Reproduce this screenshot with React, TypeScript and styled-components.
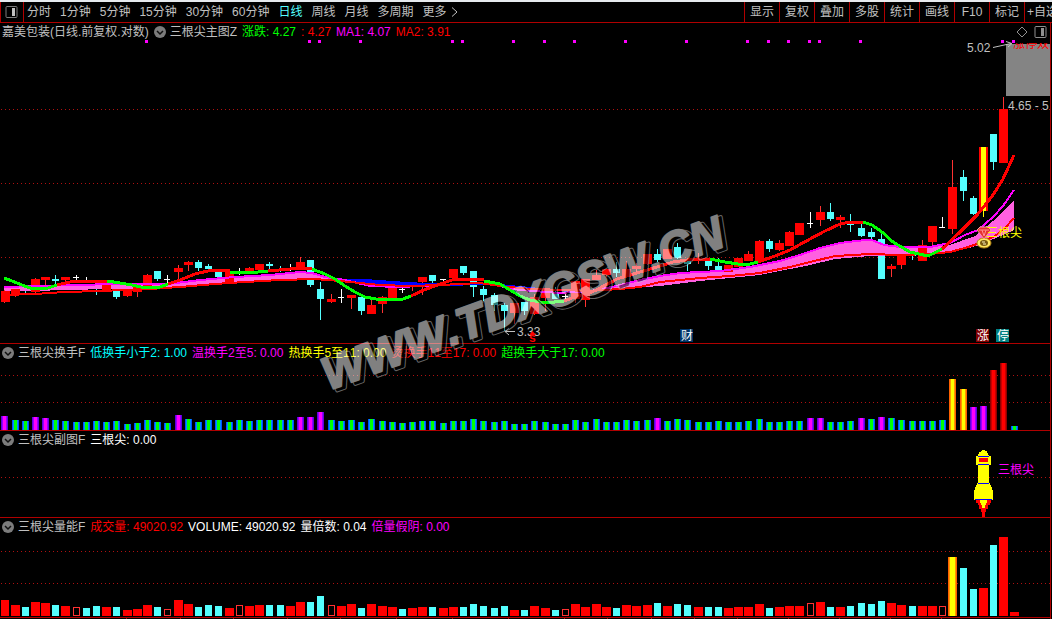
import React from 'react';
import styled, { createGlobalStyle } from 'styled-components';

const RED = '#ff0000';
const LINE = '#b00000';
const CYAN = '#54ffff';
const GREY = '#c0c0c0';
const MAGENTA = '#ff00ff';
const GREEN = '#00ff00';
const FONT = '"Liberation Sans", "Noto Sans CJK SC", sans-serif';

const Global = createGlobalStyle`
  body { margin: 0; background: #000; }
  * { box-sizing: border-box; }
`;

const Page = styled.div`
  background: #000;
  color: ${GREY};
  font-family: ${FONT};
  font-size: 12px;
  font-kerning: none;
  line-height: 16px;
  overflow: hidden;
`;

const TopStrip = styled.div`
  height: 2px;
  background: #e6eaee;
`;

const Toolbar = styled.nav`
  display: flex;
  align-items: stretch;
  height: 21px;
  border-bottom: 1px solid ${LINE};
  white-space: nowrap;
`;

const PlainButton = styled.button`
  margin: 0;
  padding: 0;
  border: 0;
  background: none;
  color: inherit;
  font: inherit;
  font-kerning: none;
  cursor: pointer;
`;

const LayoutButton = styled(PlainButton)`
  display: flex;
  align-items: center;
  width: 24px;
  padding-left: 4px;
  border: solid ${LINE};
  border-width: 0 1px;
`;

const Periods = styled.div`
  display: flex;
  flex: 1;
  gap: 9px;
  padding-left: 3px;
`;

const PeriodButton = styled(PlainButton)<{ $active?: boolean }>`
  display: flex;
  align-items: center;
  gap: 4px;
  color: ${(p) => (p.$active ? CYAN : GREY)};
`;

const Tools = styled.div`
  display: flex;
`;

const ToolButton = styled(PlainButton)`
  width: 35px;
  border-left: 1px solid ${LINE};
  &:last-child {
    width: 28px;
    padding-left: 2px;
    overflow: hidden;
    text-align: left;
  }
`;

const Workspace = styled.main`
  position: relative;
  margin-right: 1px;
  border-right: 1px solid ${LINE};
`;

const Panel = styled.section`
  border-bottom: 1px solid ${LINE};
  &:last-of-type {
    border-bottom: 0;
  }
`;

const PanelHeader = styled.header`
  display: flex;
  align-items: center;
  gap: 5px;
  height: 17px;
  padding: 0 3px 0 2px;
  white-space: nowrap;
`;

const Title = styled.h2`
  display: flex;
  align-items: center;
  gap: 4px;
  margin: 0;
  font: inherit;
  font-kerning: none;
`;

const Value = styled.span<{ $color: string }>`
  color: ${(p) => p.$color};
`;

const HeaderTools = styled.div`
  display: flex;
  gap: 6px;
  margin-left: auto;
`;

const IconButton = styled(PlainButton)`
  display: flex;
`;

const Chart = styled.svg`
  display: block;
  width: 100%;
  height: auto;
  font-family: ${FONT};
  font-size: 12px;
`;

const Watermark = styled.svg`
  position: absolute;
  top: 0;
  left: 0;
  width: 100%;
  pointer-events: none;
`;

/* Bars sit 10px apart, with one extra pixel roughly every fifth bar. */
const slot = (i: number) => {
  if (i === 0) return 1;
  const shift = i < 42 ? 2 : i < 73 ? 3 : 4;
  return 2 + 10 * i + Math.max(0, Math.floor((i - shift) / 5));
};

/* kind, high, low, body top, body bottom */
type Candle = [string, number, number, number, number];
const candles: Candle[] = [
  ['R', 290, 303, 291, 302], ['R', 289, 297, 289, 294], ['C', 285, 293, 286, 290], ['R', 278, 293, 279, 292],
  ['R', 277, 286, 277, 280], ['C', 275, 285, 279, 281], ['R', 277, 281, 277, 280], ['W', 275, 281, 277, 278],
  ['W', 277, 282, 281, 282], ['C', 282, 295, 282, 283], ['R', 283, 291, 283, 291], ['C', 286, 299, 288, 297],
  ['R', 289, 297, 289, 296], ['R', 287, 297, 287, 292], ['R', 274, 289, 275, 289], ['C', 271, 281, 271, 279],
  ['W', 275, 283, 279, 280], ['R', 265, 279, 268, 272], ['R', 261, 271, 262, 265], ['C', 260, 271, 262, 268],
  ['C', 264, 270, 266, 269], ['C', 269, 277, 269, 277], ['R', 271, 282, 271, 282], ['W', 268, 275, 273, 274],
  ['R', 267, 274, 268, 274], ['R', 264, 270, 264, 270], ['C', 262, 269, 264, 266], ['C', 266, 272, 269, 271],
  ['W', 264, 271, 269, 270], ['R', 257, 269, 262, 269], ['C', 260, 287, 260, 285], ['C', 282, 320, 289, 299],
  ['R', 294, 303, 299, 302], ['W', 289, 303, 297, 298], ['R', 295, 309, 295, 298], ['C', 295, 315, 297, 311],
  ['R', 300, 314, 305, 314], ['R', 296, 313, 297, 304], ['R', 287, 300, 287, 298], ['W', 287, 293, 289, 290],
  ['R', 282, 291, 285, 287], ['R', 277, 295, 277, 282], ['C', 275, 283, 275, 281], ['W', 279, 283, 279, 280],
  ['R', 269, 281, 269, 278], ['C', 266, 275, 266, 273], ['C', 271, 297, 271, 287], ['C', 286, 301, 289, 295],
  ['C', 293, 311, 295, 305], ['C', 303, 331, 305, 311], ['R', 303, 324, 303, 313], ['C', 302, 315, 302, 311],
  ['R', 294, 315, 297, 314], ['R', 288, 311, 288, 298], ['C', 287, 299, 292, 299], ['W', 294, 302, 296, 297],
  ['R', 281, 303, 281, 299], ['R', 279, 307, 279, 300], ['R', 270, 280, 275, 280], ['R', 269, 277, 269, 275],
  ['C', 262, 277, 269, 273], ['R', 261, 277, 269, 277], ['R', 263, 273, 266, 269], ['R', 254, 265, 254, 264],
  ['C', 249, 262, 254, 260], ['R', 249, 259, 249, 259], ['C', 243, 259, 247, 258], ['C', 259, 271, 259, 264],
  ['R', 253, 264, 258, 260], ['C', 258, 270, 260, 266], ['C', 258, 270, 266, 270], ['R', 265, 272, 265, 272],
  ['R', 258, 267, 258, 267], ['R', 251, 261, 254, 261], ['R', 240, 262, 241, 262], ['C', 239, 252, 241, 249],
  ['R', 240, 251, 243, 250], ['R', 231, 246, 232, 246], ['R', 223, 235, 223, 235], ['W', 212, 228, 223, 224],
  ['R', 206, 226, 212, 220], ['C', 203, 221, 212, 219], ['R', 215, 228, 217, 220], ['C', 214, 232, 223, 225],
  ['C', 223, 237, 228, 236], ['C', 228, 239, 232, 237], ['C', 233, 279, 239, 279], ['R', 264, 277, 266, 269],
  ['R', 254, 269, 255, 265], ['C', 253, 260, 254, 256], ['R', 240, 261, 245, 261], ['R', 226, 245, 226, 242],
  ['W', 217, 228, 227, 228], ['R', 160, 234, 187, 229], ['C', 170, 201, 177, 191], ['C', 196, 215, 198, 214],
  ['Y', 147, 217, 147, 211], ['C', 134, 170, 134, 162], ['R', 97, 163, 109, 163],
];

/* bar kind followed by its height */
const turnover = (
  'M14 G10 G9 M13 M12 G10 G9 G8 G8 G9 G8 G9 G6 G7 G10 G8 G7 M15 G11 G8 G10 G10 G8 G10 G9 G10 G10 G10 G10 M13 M13 M18 G10 G9 ' +
  'G10 G8 G11 G9 G8 G7 G8 G9 G9 G7 G9 G9 G11 G9 G8 G9 G6 G6 G9 G8 G6 G6 G10 G8 G11 G8 G8 G10 G9 G10 ' +
  'M12 G9 G11 G10 G8 G8 G9 G8 G8 G9 G11 G8 G8 G9 G9 M12 M12 G8 G8 G9 M12 G11 M13 G12 G10 G9 G9 G9 G10 ' +
  'Y51 Y41 M23 M24 R60 R67 G4'
).split(' ');

const volume = (
  'R16 R11 C9 R14 R13 C11 R10 H9 C8 C10 R9 C9 R6 R7 R11 C9 H7 R16 R12 C9 C11 C10 R8 H11 R10 R11 C11 C11 R10 R14 C14 C20 H11 R10 ' +
  'R12 C8 R12 R10 R9 C7 R8 R9 C9 R8 R9 C9 C12 C10 C8 C10 R6 C6 R10 R8 C6 H7 R12 R9 R12 R9 C8 R11 R10 R11 ' +
  'C13 R10 C12 C11 R9 C9 C9 R8 R9 R9 R12 C8 R9 R10 R10 H13 R14 C9 R9 C10 C13 C12 C15 R13 R11 C10 R10 R10 H10 ' +
  'Y59 C48 C27 R28 C71 R79 R4'
).split(' ');

const stripes: Record<string, string[]> = {
  G: ['#0050ff', '#0090ff', '#00ff00'],
  M: ['#6000e0', '#9800ff', '#ff00ff'],
  Y: ['#ff6000', '#ff9800', '#ffff00'],
  R: ['#900000', '#c80000', '#ff0000'],
};

const fastLine: [string, string][] = [
  [GREEN, '4,278 12,281 22,285 33,289 48,288 57,285'],
  [RED, '57,285 70,282 90,281 107,281'],
  [GREEN, '107,281 120,283 132,285 145,288 160,287 168,284'],
  [RED, '168,284 180,280 195,274 212,270 230,271'],
  [GREEN, '230,272 245,273 258,272 268,271'],
  [RED, '268,271 290,269 312,268'],
  [GREEN, '312,269 325,274 335,279 345,286 355,292 365,297 376,299 403,299 411,296'],
  [RED, '411,296 424,290 440,284 452,280 465,279 484,280'],
  [GREEN, '484,281 500,284 510,290 520,296 530,300 545,303 564,301'],
  [RED, '564,301 575,297 590,293 600,288 617,279 637,273 657,267 673,262 687,260 710,259'],
  [GREEN, '710,259 725,262 738,264 750,264 758,262'],
  [RED, '758,262 775,256 790,250 810,239 825,231 840,224 850,222 863,222'],
  [GREEN, '863,222 872,225 882,232 893,242 910,252 928,256 942,249'],
  [RED, '942,249 960,232 978,214 993,195 1003,179 1014,155'],
];

const magentaLine =
  '4,287 35,286 80,285 110,284 168,284 200,280 235,277 270,275 300,272 312,273 325,277 345,280 370,286 400,287 440,285 480,283 500,286 520,290 560,293 590,291 612,287 640,280 660,276 680,273 720,271 750,267 780,261 800,255 820,248 840,243 865,240 872,240 884,245 900,247 930,247 950,243 965,235 978,230 993,217 1003,206 1014,190';
const slowLine =
  '4,295 35,294 65,292 100,291 150,289 180,287 215,284 245,282 280,280 315,279 340,281 380,285 410,286 440,285 480,283 500,286 530,289 560,290 590,291 620,289 640,287 660,282 700,278 730,276 760,273 790,267 810,262 835,256 870,254 900,255 930,254 950,252 965,248 980,243 995,236 1005,228 1014,218';
const band =
  '4,287 35,286 80,285 110,284 168,284 200,280 235,277 270,275 300,272 312,273 325,277 345,281 315,279 280,280 245,282 215,284 180,287 150,289 110,289 65,290 35,291 4,291';
const rightBand =
  '600,289 612,287 640,280 660,276 680,273 720,271 750,267 780,261 800,255 820,248 840,243 865,240 872,240 884,245 900,247 930,247 950,245 975,236 993,221 1014,201 1014,230 980,245 950,253 930,255 870,256 835,259 810,265 790,269 760,275 730,278 700,281 660,286 620,289';

const signalDots = [145, 308, 318, 359, 451, 461, 512, 543, 573, 624, 685, 746, 767, 787, 808, 818, 859, 1001, 1012];
const axisTicks = [126, 180, 233, 287, 340, 396, 452, 508, 564, 607, 651, 694, 737, 788, 839, 890, 941];

function Guides({ rows }: { rows: number[] }) {
  return (
    <g stroke="#b01010" strokeDasharray="1 3">
      {rows.map((y) => (
        <line key={y} x1="1" x2="1050" y1={y + 0.5} y2={y + 0.5} />
      ))}
    </g>
  );
}

function CandleMark({ i, data }: { i: number; data: Candle }) {
  const [kind, high, low, top, bottom] = data;
  const x = slot(i);
  const wide = kind === 'R' || kind === 'Y';
  const color = kind === 'C' ? CYAN : kind === 'W' ? '#ffffff' : RED;
  const left = wide ? Math.max(x - 1, 1) : x;
  return (
    <g fill={color}>
      <rect x={x + 3} y={high} width="1" height={low - high} fill={kind === 'Y' ? '#ffff00' : kind === 'R' ? '#ff3232' : color} />
      <rect x={left} y={top} width={wide ? 9 : kind === 'W' ? 6 : 7} height={bottom - top} />
      {kind === 'Y' && <rect x={x + 1} y={top} width="5" height={bottom - top} fill="#ffff00" />}
    </g>
  );
}

function StripedBar({ x, base, height, kind, width = 7 }: { x: number; base: number; height: number; kind: string; width?: number }) {
  const [outer, inner, core] = stripes[kind];
  const y = base - height;
  return (
    <g>
      <rect x={x} y={y} width={width} height={height} fill={outer} />
      <rect x={x + 1} y={y} width={width - 2} height={height} fill={inner} />
      <rect x={x + 2} y={y} width={width - 4} height={height} fill={core} />
    </g>
  );
}

function Badge({ x, color, label }: { x: number; color: string; label: string }) {
  return (
    <g>
      <rect x={x} y="329" width="13" height="13" fill={color} />
      <text x={x + 1} y="340" fill="#ffffff">{label}</text>
    </g>
  );
}

function PriceChart() {
  const all = candles.map((data, i) => ({ data, i }));
  return (
    <Chart viewBox="0 40 1050 303" role="img" aria-label="三根尖主图">
      <Guides rows={[109, 183, 257]} />
      <g fill={MAGENTA}>
        {signalDots.map((x) => <rect key={x} x={x} y="40" width="3" height="3" />)}
      </g>
      <g shapeRendering="crispEdges">
        {all.filter((c) => 'CW'.includes(c.data[0])).map((c) => <CandleMark key={c.i} {...c} />)}
        <polygon points={band} fill="#ff60e0" />
        <polygon points={rightBand} fill="#ff60e0" />
        {all.filter((c) => 'RY'.includes(c.data[0])).map((c) => <CandleMark key={c.i} {...c} />)}
      </g>
      <g fill="none" strokeWidth="2" shapeRendering="crispEdges">
        <polygon points="340,279 365,279 407,282 447,284 440,285 400,286 370,284" fill="#0000ff" />
        <polyline points="340,280 407,284 447,285 480,284 500,285 550,290 577,291" stroke="#0000ff" />
        <polyline points={magentaLine} stroke={MAGENTA} />
        <polyline points={slowLine} stroke={RED} />
      </g>
      <g fill="none" strokeWidth="3" shapeRendering="crispEdges">
        {fastLine.map(([color, points]) => <polyline key={points} points={points} stroke={color} />)}
      </g>

      <rect x="1006" y="44" width="44" height="52" fill="#848484" />
      <clipPath id="warn"><rect x="1012" y="43" width="38" height="6" /></clipPath>
      <text x="1013" y="48" fill={RED} clipPath="url(#warn)">涨停双</text>
      <g stroke={GREY} fill="none">
        <path d="M993 47.500L1011 43.500M1006 41.500L1012 43.500L1008 47" />
        <path d="M505 331.500H515M509 328L505 331.500L509 335" />
      </g>
      <g fill={GREY}>
        <text x="967" y="52">5.02</text>
        <text x="1008" y="110">4.65 - 5</text>
        <text x="517" y="336">3.33</text>
      </g>
      <path d="M529 335L532.500 331L536 335Z" fill={RED} />
      <text x="529" y="342" fill={RED} fontWeight="bold">s</text>

      <g>
        <ellipse cx="984" cy="243" rx="7" ry="5" fill="#ffe860" stroke="#b08010" />
        <ellipse cx="984" cy="243" rx="4" ry="3" fill="#7a5a10" />
        <path d="M982 242H985M983 244H986" stroke="#fff6c0" />
        <path d="M977 230L980 227H988L991 230L984 239Z" fill="#e83030" stroke="#f0a0a0" />
        <path d="M979 230H989M982 230L984 236L986 230" stroke="#ff9090" fill="none" />
      </g>
      <text x="986" y="237" fill="#ffff00">三根尖</text>
      <Badge x={680} color="#003366" label="财" />
      <Badge x={976} color="#800000" label="涨" />
      <Badge x={996} color="#008080" label="停" />
    </Chart>
  );
}

function TurnoverChart() {
  return (
    <Chart viewBox="0 361 1050 69" role="img" aria-label="三根尖换手">
      <Guides rows={[375, 402]} />
      <g shapeRendering="crispEdges">
        {turnover.map((bar, i) => (
          <StripedBar key={i} x={slot(i)} base={430} height={Number(bar.slice(1))} kind={bar[0]} />
        ))}
      </g>
    </Chart>
  );
}

function SignalChart() {
  return (
    <Chart viewBox="0 448 1050 69" role="img" aria-label="三根尖副图">
      <Guides rows={[477]} />
      <g shapeRendering="crispEdges">
        <path
          d="M982 450H985V451H987V453H988V455H989V456H991V465H989V483H990V485H991V487H992V490H993V500H974V490H975V487H976V485H977V483H978V465H976V456H978V454H979V452H981V451H982Z"
          fill="#ffff00"
        />
        <path d="M978 456h11v1h-11zM978 464h11v1h-11zM978 483h11v1h-11zM975 499h17v1h-17z" fill="#0000ff" />
        <rect x="979" y="458" width="9" height="4" fill={RED} />
        <path d="M976 500H991V503H990V505H988V509H986V512H985V517H982V512H981V509H979V505H978V503H976Z" fill={RED} />
        <path d="M980 500H987V503H986V505H985V508H982V505H981V503H980Z" fill="#ffff00" />
      </g>
      <text x="998" y="474" fill={MAGENTA}>三根尖</text>
    </Chart>
  );
}

function VolumeBar({ i, bar }: { i: number; bar: string }) {
  const height = Number(bar.slice(1));
  const x = slot(i);
  const y = 616 - height;
  if (bar[0] === 'Y') return <StripedBar x={x - 1} base={616} height={height} kind="Y" width={9} />;
  if (bar[0] === 'H') return <rect x={x + 0.5} y={y + 0.5} width="6" height={height - 1} fill="none" stroke="#ff3232" />;
  if (bar[0] === 'C') return <rect x={x} y={y} width="7" height={height} fill={CYAN} />;
  return <rect x={Math.max(x - 1, 1)} y={y} width={i ? 9 : 8} height={height} fill={RED} />;
}

function VolumeChart() {
  return (
    <Chart viewBox="0 535 1050 84" role="img" aria-label="三根尖量能">
      <Guides rows={[551, 583]} />
      <g shapeRendering="crispEdges">
        {volume.map((bar, i) => <VolumeBar key={i} i={i} bar={bar} />)}
        <rect x="0" y="617" width="1050" height="1" fill={LINE} />
        {axisTicks.map((x) => <rect key={x} x={x} y="618" width="1" height="1" fill={LINE} />)}
      </g>
    </Chart>
  );
}

function CollapseButton({ label }: { label: string }) {
  return (
    <IconButton aria-label={label}>
      <svg width="12" height="12" viewBox="0 0 12 12">
        <circle cx="6" cy="6" r="6" fill="#7c7c7c" />
        <path d="M3 5L6 8L9 5" fill="none" stroke="#101010" strokeWidth="1.500" />
      </svg>
    </IconButton>
  );
}

function SplitIcon({ flip }: { flip?: boolean }) {
  return (
    <svg width="13" height="12" viewBox="0 0 13 12">
      <rect x="1" y="0.500" width="11" height="11" rx="1" fill="none" stroke={flip ? '#909090' : '#7c7c7c'} />
      <rect x="7" y="2" width="3" height="8" fill={flip ? '#909090' : GREY} />
    </svg>
  );
}

type Reading = [string, string];
function Readings({ items }: { items: Reading[] }) {
  return <>{items.map(([text, color]) => <Value key={text} $color={color}>{text}</Value>)}</>;
}

const periods = ['分时', '1分钟', '5分钟', '15分钟', '30分钟', '60分钟', '日线', '周线', '月线', '多周期'];
const tools = ['显示', '复权', '叠加', '多股', '统计', '画线', 'F10', '标记', '+自选'];

export default function App() {
  return (
    <Page>
      <Global />
      <TopStrip />
      <Toolbar>
        <LayoutButton aria-label="布局"><SplitIcon /></LayoutButton>
        <Periods>
          {periods.map((p) => <PeriodButton key={p} $active={p === '日线'}>{p}</PeriodButton>)}
          <PeriodButton>
            更多
            <svg width="8" height="10" viewBox="0 0 8 10">
              <path d="M1 0.500L6 5L1 9.500" fill="none" stroke={GREY} />
            </svg>
          </PeriodButton>
        </Periods>
        <Tools>
          {tools.map((t) => <ToolButton key={t}>{t}</ToolButton>)}
        </Tools>
      </Toolbar>
      <Workspace>
        <Panel>
          <PanelHeader>
            <span>嘉美包装(日线.前复权.对数)</span>
            <Title><CollapseButton label="主图指标" />三根尖主图Z</Title>
            <Readings items={[['涨跌: 4.27', GREEN], [': 4.27', RED], ['MA1: 4.07', MAGENTA], ['MA2: 3.91', RED]]} />
            <HeaderTools>
              <IconButton aria-label="标注">
                <svg width="12" height="12" viewBox="0 0 12 12">
                  <path d="M6 1L11 6L6 11L1 6Z" fill="none" stroke="#909090" />
                </svg>
              </IconButton>
              <IconButton aria-label="侧栏"><SplitIcon flip /></IconButton>
            </HeaderTools>
          </PanelHeader>
          <PriceChart />
        </Panel>
        <Panel>
          <PanelHeader>
            <Title><CollapseButton label="换手指标" />三根尖换手F</Title>
            <Readings
              items={[
                ['低换手小于2: 1.00', '#00ffff'],
                ['温换手2至5: 0.00', MAGENTA],
                ['热换手5至11: 0.00', '#ffff00'],
                ['烫换手11至17: 0.00', RED],
                ['超换手大于17: 0.00', GREEN],
              ]}
            />
          </PanelHeader>
          <TurnoverChart />
        </Panel>
        <Panel>
          <PanelHeader>
            <Title><CollapseButton label="副图指标" />三根尖副图F</Title>
            <Readings items={[['三根尖: 0.00', '#ffffff']]} />
          </PanelHeader>
          <SignalChart />
        </Panel>
        <Panel>
          <PanelHeader>
            <Title><CollapseButton label="量能指标" />三根尖量能F</Title>
            <Readings
              items={[
                ['成交量: 49020.92', RED],
                ['VOLUME: 49020.92', '#ffffff'],
                ['量倍数: 0.04', '#ffffff'],
                ['倍量假阴: 0.00', MAGENTA],
              ]}
            />
          </PanelHeader>
          <VolumeChart />
        </Panel>
        <Watermark viewBox="0 23 1050 596" aria-hidden="true">
          <g
            opacity="0.5"
            transform="rotate(-20 330 392)"
            fontFamily="Liberation Sans, sans-serif"
            fontSize="46"
            fontWeight="bold"
            fontStyle="italic"
            strokeLinejoin="round"
          >
            <text x="332" y="393" fill="#000000" stroke="#c8c8c8" strokeWidth="4">WWW.TDXGSW.CN</text>
            <text x="332" y="393" fill="#000000" stroke="#000000" strokeWidth="2">WWW.TDXGSW.CN</text>
            <text x="329" y="390" fill="#ffffff" stroke="#ffffff" strokeWidth="2">WWW.TDXGSW.CN</text>
          </g>
        </Watermark>
      </Workspace>
    </Page>
  );
}
